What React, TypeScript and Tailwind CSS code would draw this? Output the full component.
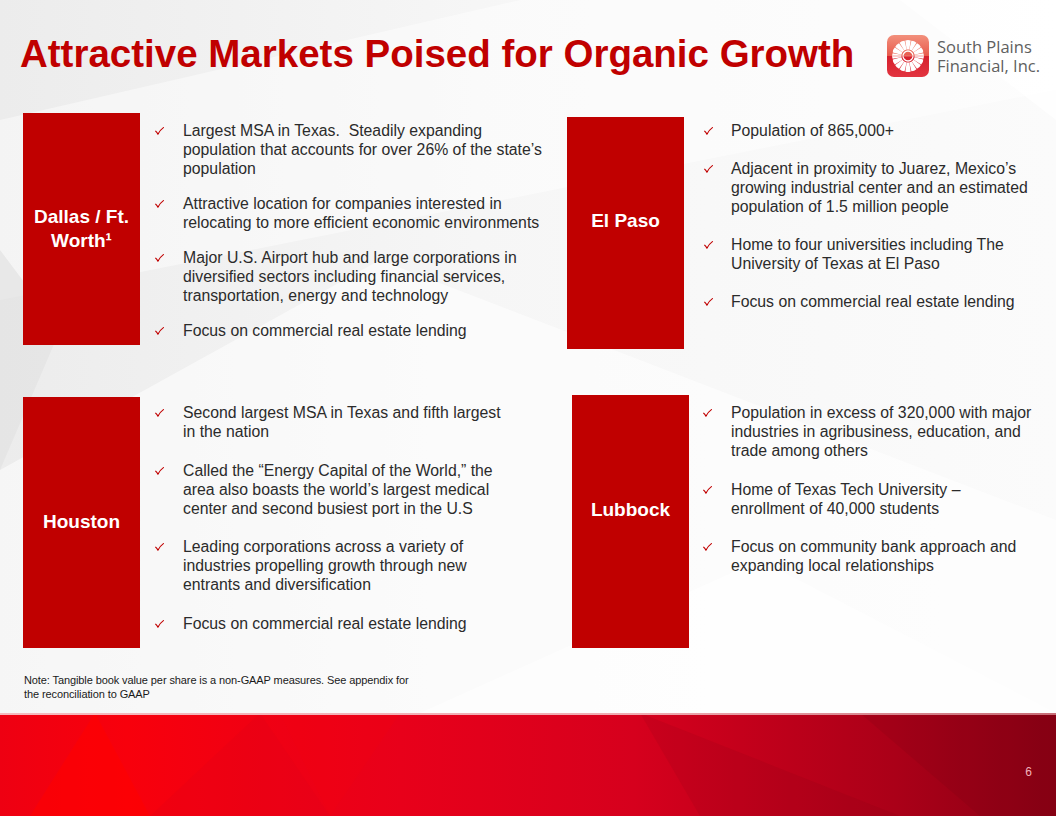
import React from "react"

type Market = {
  name: React.ReactNode
  lines: string[][]
  boxClass: string
  labelClass: string
  listClass: string
  checkClass: string
  gapClass: string
}

const markets: Market[] = [
  {
    name: (
      <>
        Dallas / Ft.
        <br />
        Worth¹
      </>
    ),
    boxClass: "ml-[23px] h-[232px]",
    labelClass: "leading-[24px]",
    listClass: "pl-[15px] pt-[8px]",
    checkClass: "w-[28px]",
    gapClass: "gap-[16px]",
    lines: [
      ["Largest MSA in Texas.  Steadily expanding", "population that accounts for over 26% of the state’s", "population"],
      ["Attractive location for companies interested in", "relocating to more efficient economic environments"],
      ["Major U.S. Airport hub and large corporations in", "diversified sectors including financial services,", "transportation, energy and technology"],
      ["Focus on commercial real estate lending"],
    ],
  },
  {
    name: "El Paso",
    boxClass: "mt-[4px] h-[232px]",
    labelClass: "pb-[24px]",
    listClass: "pl-[20px] pt-[4px] mt-[4px]",
    checkClass: "w-[27px]",
    gapClass: "gap-[19px]",
    lines: [
      ["Population of 865,000+"],
      ["Adjacent in proximity to Juarez, Mexico’s", "growing industrial center and an estimated", "population of 1.5 million people"],
      ["Home to four universities including The", "University of Texas at El Paso"],
      ["Focus on commercial real estate lending"],
    ],
  },
  {
    name: "Houston",
    boxClass: "ml-[23px] mt-[2px] h-[251px]",
    labelClass: "",
    listClass: "pl-[15px] pt-[8px]",
    checkClass: "w-[28px]",
    gapClass: "gap-[19.5px]",
    lines: [
      ["Second largest MSA in Texas and fifth largest", "in the nation"],
      ["Called the “Energy Capital of the World,” the", "area also boasts the world’s largest medical", "center and second busiest port in the U.S"],
      ["Leading corporations across a variety of", "industries propelling growth through new", "entrants and diversification"],
      ["Focus on commercial real estate lending"],
    ],
  },
  {
    name: "Lubbock",
    boxClass: "ml-[5px] h-[253px]",
    labelClass: "pb-[22px]",
    listClass: "pl-[14px] pt-[8px]",
    checkClass: "w-[28px]",
    gapClass: "gap-[19.5px]",
    lines: [
      ["Population in excess of 320,000 with major", "industries in agribusiness, education, and", "trade among others"],
      ["Home of Texas Tech University –", "enrollment of 40,000 students"],
      ["Focus on community bank approach and", "expanding local relationships"],
    ],
  },
]

function Check() {
  return (
    <svg width="9" height="8" viewBox="0 0 9 8" className="mt-[6px]">
      <path d="M0.7 4.2 Q1.9 5 2.9 7.2 Q5 3 8.4 0.6" fill="none" stroke="#c00000" strokeWidth="1.15" strokeLinecap="round" strokeLinejoin="round" />
    </svg>
  )
}

function Logo() {
  const petals = Array.from({ length: 16 }, (_, i) => i * 22.5)
  return (
    <div className="flex items-center gap-[8px]">
      <svg width="42" height="42" viewBox="0 0 42 42">
        <defs>
          <linearGradient id="logoBg" x1="0" y1="0" x2="0" y2="1">
            <stop offset="0" stopColor="#f2907c" />
            <stop offset="0.5" stopColor="#e85a4c" />
            <stop offset="0.5" stopColor="#d6202c" />
            <stop offset="1" stopColor="#e23440" />
          </linearGradient>
        </defs>
        <rect width="42" height="42" rx="7" fill="url(#logoBg)" />
        <g transform="translate(21 21)">
          {petals.map((a) => (
            <path key={a} d="M-1.3 -6.6 L-2.7 -15.4 Q0 -16.6 2.7 -15.4 L1.3 -6.6 Z" fill="#ffffff" transform={`rotate(${a})`} />
          ))}
          <circle r="5" fill="none" stroke="#ffffff" strokeWidth="1.3" />
          <line x1="-16" y1="0" x2="16" y2="0" stroke="#ef8a86" strokeWidth="0.8" />
        </g>
      </svg>
      <div className="font-['Open_Sans',sans-serif] text-[16.5px] leading-[19.5px] text-[#5f5f5f]">
        <div>South Plains</div>
        <div>Financial, Inc.</div>
      </div>
    </div>
  )
}

function MarketBlock({ m }: { m: Market }) {
  return (
    <div className="flex items-start">
      <div className={`w-[117px] shrink-0 bg-[#c00000] flex items-center justify-center text-center text-white font-bold text-[19px] ${m.boxClass}`}>
        <div className={m.labelClass}>{m.name}</div>
      </div>
      <ul className={`flex flex-col ${m.gapClass} ${m.listClass}`}>
        {m.lines.map((para, i) => (
          <li key={i} className="flex items-start">
            <span className={`${m.checkClass} shrink-0`}>
              <Check />
            </span>
            <span className="text-[15.8px] leading-[19px] text-[#2b2b2b] whitespace-pre">
              {para.map((l, j) => (
                <span key={j} className="block">
                  {l}
                </span>
              ))}
            </span>
          </li>
        ))}
      </ul>
    </div>
  )
}

function Backdrop() {
  return (
    <svg className="absolute inset-0 w-full h-full" viewBox="0 0 1056 713" preserveAspectRatio="none">
      <defs>
        <linearGradient id="bgBase" x1="0" y1="0" x2="1" y2="0">
          <stop offset="0" stopColor="#ececec" />
          <stop offset="0.45" stopColor="#f6f6f6" />
          <stop offset="1" stopColor="#fbfbfb" />
        </linearGradient>
      </defs>
      <rect width="1056" height="713" fill="url(#bgBase)" />
      <polygon points="0,120 520,0 1056,0 1056,90 0,300" fill="#ffffff" opacity="0.45" />
      <polygon points="0,470 380,260 1056,520 1056,713 0,713" fill="#ffffff" opacity="0.55" />
      <polygon points="0,250 60,330 0,470" fill="#e2e2e2" opacity="0.7" />
      <polygon points="420,713 760,560 1056,713" fill="#ffffff" opacity="0.6" />
      <polygon points="900,0 1056,120 1056,0" fill="#ffffff" opacity="0.7" />
    </svg>
  )
}

function Band() {
  return (
    <div className="relative h-[103px] bg-[linear-gradient(90deg,#ee0012_0%,#f8000c_12%,#e8001a_38%,#d6001d_60%,#aa0018_85%,#8a0014_100%)] overflow-hidden">
      <svg className="absolute inset-0 w-full h-full" viewBox="0 0 1056 103" preserveAspectRatio="none">
        <polygon points="30,103 95,0 150,103" fill="#ff0000" opacity="0.55" />
        <polygon points="150,103 260,0 330,103" fill="#d8001a" opacity="0.18" />
        <polygon points="280,0 330,103 400,0" fill="#f5000f" opacity="0.25" />
        <polygon points="640,0 900,103 700,103" fill="#700010" opacity="0.1" />
        <polygon points="860,0 1056,0 1056,103 980,103" fill="#600010" opacity="0.12" />
      </svg>
      <div className="absolute top-0 left-0 right-0 h-[2px] bg-[linear-gradient(90deg,#f4b9be,#efaab1_60%,#c86d77)]" />
      <div className="relative flex justify-end pt-[51px] pr-[24px]">
        <span className="text-[12px] leading-[16px] text-[#f2b3ba]">6</span>
      </div>
    </div>
  )
}

export default function App() {
  return (
    <div className="relative w-[1056px] h-[816px] overflow-hidden bg-[#f4f4f4] font-['Liberation_Sans',Arial,sans-serif]">
      <div className="absolute left-0 top-0 w-[1056px] h-[713px]">
        <Backdrop />
      </div>
      <div className="relative flex flex-col h-full">
        <header className="h-[113px] flex items-start justify-between pl-[20px] pr-[16px] pt-[35px]">
          <h1 className="text-[38.5px] leading-[38px] font-bold text-[#c00000]">
            Attractive Markets Poised for Organic Growth
          </h1>
          <Logo />
        </header>

        <div className="grid grid-cols-[567px_489px] grid-rows-[282px_253px]">
          {markets.map((m, i) => (
            <MarketBlock key={i} m={m} />
          ))}
        </div>

        <p className="mt-[25px] pl-[24px] text-[11px] leading-[14px] text-[#1a1a1a] tracking-[-0.1px]">
          Note: Tangible book value per share is a non-GAAP measures. See appendix for
          <br />
          the reconciliation to GAAP
        </p>

        <div className="mt-auto">
          <Band />
        </div>
      </div>
    </div>
  )
}
